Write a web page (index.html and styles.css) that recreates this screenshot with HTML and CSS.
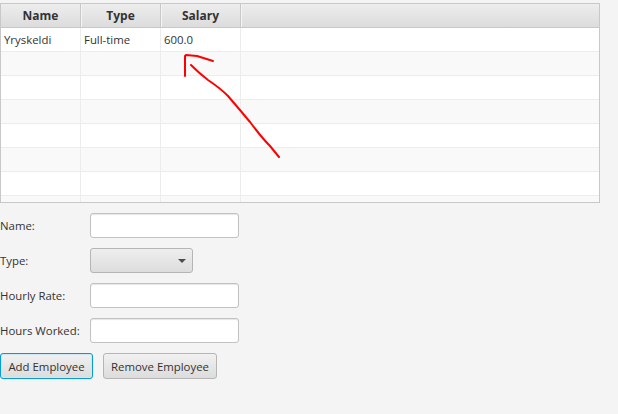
FILE: index.html
```html
<!DOCTYPE html>
<html>
<head>
<meta charset="utf-8">
<link rel="stylesheet" href="styles.css">
</head>
<body>
<div class="app">
  <div class="table-wrap">
    <div class="table">
      <div class="thead">
        <div class="th c1">Name</div>
        <div class="th c2">Type</div>
        <div class="th c3">Salary</div>
        <div class="th c4"></div>
      </div>
      <div class="tbody">
        <div class="tr even"><div class="td c1">Yryskeldi</div><div class="td c2">Full-time</div><div class="td c3">600.0</div><div class="td c4"></div></div>
        <div class="tr odd"><div class="td c1"></div><div class="td c2"></div><div class="td c3"></div><div class="td c4"></div></div>
        <div class="tr even"><div class="td c1"></div><div class="td c2"></div><div class="td c3"></div><div class="td c4"></div></div>
        <div class="tr odd"><div class="td c1"></div><div class="td c2"></div><div class="td c3"></div><div class="td c4"></div></div>
        <div class="tr even"><div class="td c1"></div><div class="td c2"></div><div class="td c3"></div><div class="td c4"></div></div>
        <div class="tr odd"><div class="td c1"></div><div class="td c2"></div><div class="td c3"></div><div class="td c4"></div></div>
        <div class="tr even"><div class="td c1"></div><div class="td c2"></div><div class="td c3"></div><div class="td c4"></div></div>
        <div class="tr odd"><div class="td c1"></div><div class="td c2"></div><div class="td c3"></div><div class="td c4"></div></div>
      </div>
    </div>
    <svg class="annot" width="618" height="200" viewBox="0 0 618 200">
      <path d="M185 76 L185 56 L186 55 L197 56 L213 61" fill="none" stroke="#ff0000" stroke-width="2" stroke-linecap="round" stroke-linejoin="round"/>
      <path d="M191 65 Q200 74 208 80 Q220 88 228 96 Q240 110 250 122 Q262 138 270 146 L279 157" fill="none" stroke="#ff0000" stroke-width="2" stroke-linecap="round" stroke-linejoin="round"/>
    </svg>
  </div>
  <div class="form">
    <div class="frow"><span class="lbl">Name:</span><div class="field"></div></div>
    <div class="frow"><span class="lbl">Type:</span><div class="combo"><span class="arrow"></span></div></div>
    <div class="frow"><span class="lbl">Hourly Rate:</span><div class="field"></div></div>
    <div class="frow"><span class="lbl">Hours Worked:</span><div class="field"></div></div>
    <div class="buttons">
      <button class="btn focused">Add Employee</button>
      <button class="btn">Remove Employee</button>
    </div>
  </div>
</div>
</body>
</html>
```

FILE: styles.css
```css
* { box-sizing: border-box; }
html, body { margin: 0; padding: 0; }
body {
  background: #f4f4f4;
  font-family: "Open Sans", "Noto Sans", sans-serif;
  font-size: 11.4px;
  color: #333333;
  width: 618px;
  height: 414px;
  overflow: hidden;
}
.app { padding-top: 3px; }
.table-wrap { position: relative; }
.table {
  width: 600px;
  height: 200px;
  border: 1px solid #c8c8c8;
  background: #ffffff;
  overflow: hidden;
  display: flex;
  flex-direction: column;
}
.thead {
  display: flex;
  height: 24px;
  flex: none;
  background: linear-gradient(#ededed, #dcdcdc);
  border-bottom: 1px solid #c8c8c8;
}
.th {
  font-weight: bold;
  font-size: 12px;
  text-align: center;
  line-height: 23px;
  border-right: 1px solid #c8c8c8;
  box-shadow: inset 1px 0 0 #f4f4f4;
}
.c1 { width: 80px; flex: none; }
.c2 { width: 80px; flex: none; }
.c3 { width: 80px; flex: none; }
.c4 { flex: 1; border-right: none; }
.th.c1 { width: 80px; box-shadow: none; }
.tr { display: flex; height: 24px; flex: none; border-bottom: 1px solid #ececec; }
.tr.even { background: #ffffff; }
.tr.odd { background: #f9f9f9; }
.td {
  line-height: 23px;
  padding-left: 3px;
  border-right: 1px solid #ececec;
  white-space: nowrap;
  color: #333333;
}
.td.c4 { border-right: none; }
.annot { position: absolute; left: 0; top: -3px; pointer-events: none; }
.form {
  display: flex;
  flex-direction: column;
  gap: 10px;
  margin-top: 10px;
}
.frow { display: flex; align-items: center; height: 25px; }
.lbl { width: 90px; flex: none; color: #333333; white-space: nowrap; }
.field {
  width: 149px;
  height: 25px;
  background: #ffffff;
  border: 1px solid #c2c2c2;
  border-radius: 3px;
  box-shadow: inset 0 1px 1px #e6e6e6;
}
.combo {
  width: 103px;
  height: 25px;
  border: 1px solid #b5b5b5;
  border-radius: 3px;
  background: linear-gradient(#eeeeee, #dddddd);
  display: flex;
  align-items: center;
  justify-content: flex-end;
  padding-right: 6px;
}
.arrow {
  width: 0; height: 0;
  border-left: 4px solid transparent;
  border-right: 4px solid transparent;
  border-top: 4px solid #4d4d4d;
}
.buttons { display: flex; gap: 10px; }
.btn {
  font-family: inherit;
  font-size: 11.4px;
  color: #333333;
  height: 26px;
  padding: 0;
  white-space: nowrap;
  text-align: center;
  border: 1px solid #b5b5b5;
  border-radius: 3px;
  background: linear-gradient(#f1f1f1, #dcdcdc);
  margin: 0;
}
.btn.focused {
  border: 1px solid #039ed3;
  box-shadow: inset 0 0 0 1px #cde8f4;
  width: 93px;
}
.btn:not(.focused) { width: 114px; }
```
